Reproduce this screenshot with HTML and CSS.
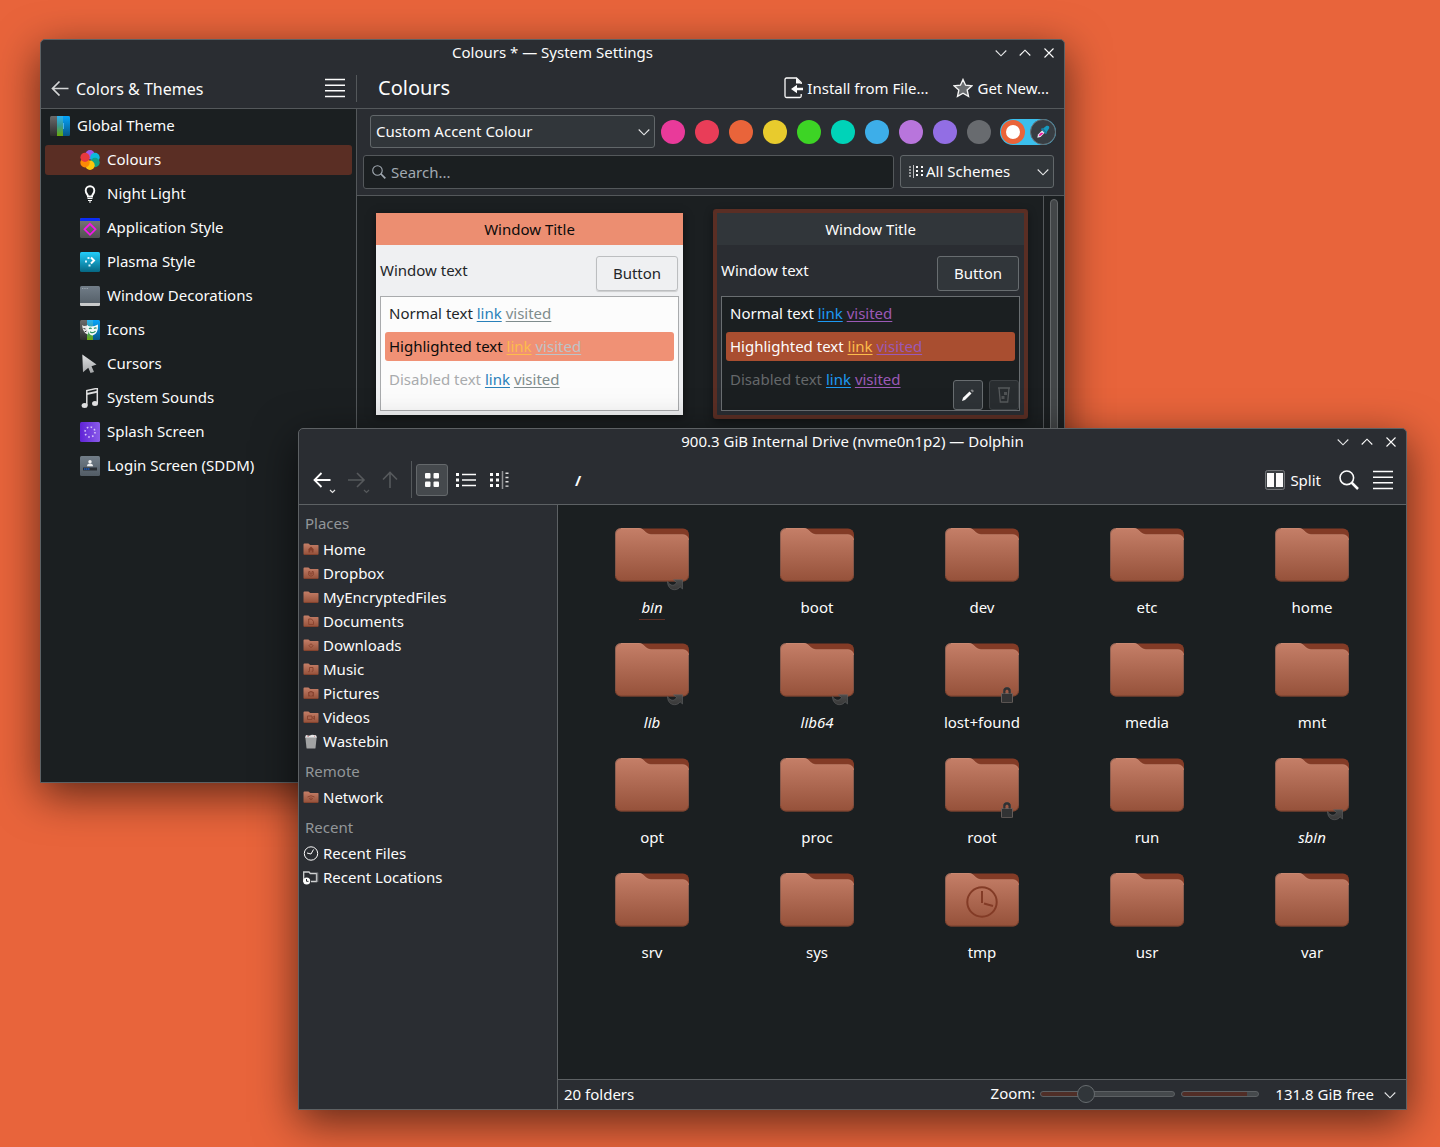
FILE: index.html
```html
<!DOCTYPE html>
<html lang="en">
<head>
<meta charset="utf-8">
<title>Desktop</title>
<link rel="stylesheet" href="styles.css">
</head>
<body>
<svg class="defs" width="0" height="0">
  <defs>
    <linearGradient id="g-folder" x1="0" y1="0" x2="0" y2="1"><stop offset="0" stop-color="#c57f68"/><stop offset="1" stop-color="#95513a"/></linearGradient>
    <linearGradient id="g-grey" x1="0" y1="0" x2="0" y2="1"><stop offset="0" stop-color="#6b6b6b"/><stop offset="1" stop-color="#2b2b2b"/></linearGradient>
    <linearGradient id="g-app" x1="0" y1="0" x2="0" y2="1"><stop offset="0" stop-color="#7a7a7a"/><stop offset="1" stop-color="#505050"/></linearGradient>
    <linearGradient id="g-mid" x1="0" y1="0" x2="0" y2="1"><stop offset="0" stop-color="#2ab2f2"/><stop offset=".5" stop-color="#3a9a90"/><stop offset="1" stop-color="#6aa808"/></linearGradient>
    <linearGradient id="g-blue" x1="0" y1="0" x2="0" y2="1"><stop offset="0" stop-color="#05a5fb"/><stop offset="1" stop-color="#075687"/></linearGradient>
    <linearGradient id="g-plasma" x1="0" y1="0" x2="0" y2="1"><stop offset="0" stop-color="#22cdfb"/><stop offset="1" stop-color="#066783"/></linearGradient>
    <linearGradient id="g-slate" x1="0" y1="0" x2="0" y2="1"><stop offset="0" stop-color="#717d88"/><stop offset="1" stop-color="#525c65"/></linearGradient>
    <linearGradient id="g-splash" x1="0" y1="0" x2="1" y2="0"><stop offset="0" stop-color="#5f22d6"/><stop offset="1" stop-color="#8a5cea"/></linearGradient>
    <linearGradient id="g-light" x1="0" y1="0" x2="0" y2="1"><stop offset="0" stop-color="#dfe1e2"/><stop offset="1" stop-color="#a3a5a7"/></linearGradient>
    <linearGradient id="g-emblem" x1="0" y1="0" x2="0" y2="1"><stop offset="0" stop-color="#4a4a4a"/><stop offset="1" stop-color="#383838"/></linearGradient>
    <symbol id="folder" viewBox="0 0 74 54">
      <path d="M25 .5H68a6 6 0 0 1 6 6V20H25z" fill="#833b26"/>
      <path d="M6 0H24C29 0 30 6 36 6.500H68a6 6 0 0 1 6 6V47.500a6 6 0 0 1-6 6H6a6 6 0 0 1-6-6V6A6 6 0 0 1 6 0z" fill="url(#g-folder)"/>
      <path d="M6 .5H24.500C29 .5 30 6.500 36 6.500H68a5.500 5.500 0 0 1 5.500 5.500" fill="none" stroke="#d19a86" stroke-opacity=".3"/>
      <path d="M.5 47V6A5.500 5.500 0 0 1 6 .5M73.500 12V47.500" fill="none" stroke="#5d4a45" stroke-opacity=".45"/>
      <path d="M.5 47.500A5.500 5.500 0 0 0 6 53H68a5.500 5.500 0 0 0 5.500-5.500" fill="none" stroke="#6e3a28" stroke-opacity=".7"/>
    </symbol>
    <symbol id="mini" viewBox="0 0 16 16">
      <path d="M1 2H6L7.500 3H15V12.500H1z" fill="#7d3823"/>
      <path d="M.5 2.500a1 1 0 0 1 1-1H5.500L7 3H15a.5.5 0 0 1 .5.5V12a.7.7 0 0 1-.7.700H1.200A.7.7 0 0 1 .5 12z" fill="url(#g-folder)"/>
      <path d="M1 12.500H15" stroke="#84432e" />
    </symbol>
    <symbol id="link" viewBox="0 0 17 12">
      <path d="M.5 2.500C.5 7.500 3.500 10.700 7.500 10.700 10 10.700 12 9.500 13 7.700L15.500 10V.8H6.500L9.500 3.500C8 7 3.500 7.500 .5 2.500z" fill="url(#g-emblem)" stroke="#606263" stroke-width=".6"/>
    </symbol>
    <symbol id="lock" viewBox="0 0 12 16">
      <path d="M2.500 7V4a3.500 3.500 0 0 1 7 0V7M11 6.500H1A.5.5 0 0 0 .5 7V15a.7.7 0 0 0 .7.700H10.800A.7.7 0 0 0 11.500 15V7a.5.5 0 0 0-.5-.5z" fill="#323334" stroke="#6b625f" stroke-width=".9"/>
      <path d="M4.300 6V4.300a1.700 1.700 0 0 1 3.400 0V6z" fill="#9a5a46"/>
      <path d="M3.300 6.500V4a2.700 2.700 0 0 1 5.400 0V6.500" fill="none" stroke="#303132" stroke-width="2"/>
    </symbol>
    <symbol id="down" viewBox="0 0 12 12"><path d="M.7 3.500 6 8.800 11.300 3.500" fill="none" stroke="#e6e7e8" stroke-width="1.100"/></symbol>
    <symbol id="up" viewBox="0 0 12 12"><path d="M.7 8.500 6 3.200 11.300 8.500" fill="none" stroke="#fcfcfc" stroke-width="1.100"/></symbol>
    <symbol id="close" viewBox="0 0 12 12"><path d="M1.500 1.500 10.500 10.500M10.500 1.500 1.500 10.500" fill="none" stroke="#fcfcfc" stroke-width="1.100"/></symbol>
    <symbol id="burger" viewBox="0 0 20 20"><path d="M0 1.500H20M0 7.300H20M0 12.700H20M0 18.500H20" stroke="#fcfcfc" stroke-width="1.500"/></symbol>
    <symbol id="search" viewBox="0 0 20 20"><circle cx="7.800" cy="7.800" r="6.800" fill="none" stroke="currentColor" stroke-width="1.600"/><path d="M12.500 12.500 19 19" stroke="currentColor" stroke-width="2.500"/></symbol>
  </defs>
</svg>

<section class="window settings">
  <header class="titlebar"><h1 class="title">Colours * — System Settings</h1>
    <div class="controls"><svg><use href="#down"/></svg><svg><use href="#up"/></svg><svg><use href="#close"/></svg></div>
  </header>
  <div class="settings-tools">
    <div class="crumb">
      <svg width="18" height="16" viewBox="0 0 18 16"><path d="M8.500 1.500 1.500 8.500 8.500 15.500M1.500 8.500H17.500" fill="none" stroke="#d4d5d6" stroke-width="1.700"/></svg>
      <span class="grow">Colors &amp; Themes</span>
      <svg width="20" height="20"><use href="#burger"/></svg>
    </div>
    <h2 class="page-title">Colours</h2>
    <div class="action install"><svg width="20" height="22" viewBox="0 0 20 22"><path d="M17.200 7V5.500L12.500 1H2.500A1.500 1.500 0 0 0 1 2.500V19A1.500 1.500 0 0 0 2.500 20.500H15.700A1.500 1.500 0 0 0 17.200 19V17" fill="none" stroke="#fcfcfc" stroke-width="1.300"/><path d="M12 .8V6.500H17.500zM7 12 13 7.700V10.700H19V13.300H13V16.300z" fill="#fcfcfc"/></svg><span>Install from File...</span></div>
    <div class="action getnew"><svg width="20" height="20" viewBox="0 0 20 20"><path d="M10 1.500 12.600 7.200 18.800 7.900 14.200 12.100 15.500 18.300 10 15.200 4.500 18.300 5.800 12.100 1.200 7.900 7.400 7.200z" fill="#696c6f" stroke="#f4f4f4" stroke-width="1.400"/></svg><span>Get New...</span></div>
  </div>
  <div class="settings-body">
    <nav class="categories">
      <div class="cat top"><svg viewBox="0 0 20 20"><rect width="20" height="20" rx="1.500" fill="url(#g-grey)"/><path d="M13 0H18.500A1.500 1.500 0 0 1 20 1.500V18.500A1.500 1.500 0 0 1 18.500 20H13z" fill="url(#g-blue)"/><path d="M7 0H13V20H7z" fill="url(#g-mid)"/><path d="M13.500 7V13" stroke="#4bb4ec"/></svg><span>Global Theme</span></div>
      <div class="cat active"><svg viewBox="0 0 20 20"><circle cx="10" cy="4.700" r="4.700" fill="#9b59e8"/><circle cx="15" cy="7.500" r="4.700" fill="#0cb9dc"/><circle cx="15" cy="12.500" r="4.700" fill="#12a085"/><circle cx="10" cy="15.300" r="4.700" fill="#fcc60b"/><circle cx="5" cy="12.700" r="4.700" fill="#fb8b05"/><circle cx="5" cy="7.300" r="4.600" fill="#e6393f"/></svg><span>Colours</span></div>
      <div class="cat"><svg viewBox="0 0 20 20"><path d="M8 12.500C8 10.500 5.700 9.500 5.700 6.500a4.300 4.300 0 0 1 8.600 0C14.300 9.500 12 10.500 12 12.500z" fill="none" stroke="#fcfcfc" stroke-width="1.900"/><path d="M7.500 14.500H12.500M8 16.500H12M9 18H11" stroke="#fcfcfc" stroke-width="1.200"/></svg><span>Night Light</span></div>
      <div class="cat"><svg viewBox="0 0 20 20"><rect width="20" height="20" rx="1.500" fill="url(#g-app)"/><path d="M0 3V1.500A1.500 1.500 0 0 1 1.500 0H18.500A1.500 1.500 0 0 1 20 1.500V3z" fill="#0b2cf5"/><path d="M10 5.800 15.500 11.300 10 16.800 4.500 11.300z" fill="none" stroke="#f516ea" stroke-width="1.800"/></svg><span>Application Style</span></div>
      <div class="cat"><svg viewBox="0 0 20 20"><rect width="20" height="20" rx="1.500" fill="url(#g-plasma)"/><path d="M11 5.500 14 8.500 11 11.500" fill="none" stroke="#fff" stroke-width="2"/><path d="M7.500 5h2v2H7.500zM5 8.500h2v2H5zM8.500 12.500h2v2h-2z" fill="#d9f6ff"/></svg><span>Plasma Style</span></div>
      <div class="cat"><svg viewBox="0 0 20 20"><rect width="20" height="20" rx="1.500" fill="url(#g-slate)"/><path d="M0 17H20V18.500A1.500 1.500 0 0 1 18.500 20H1.500A1.500 1.500 0 0 1 0 18.500z" fill="#c9cacb"/><path d="M2 2.500H8" stroke="#9aa5ae" stroke-dasharray="1 .7"/></svg><span>Window Decorations</span></div>
      <div class="cat"><svg viewBox="0 0 20 20"><rect width="20" height="20" rx="1.500" fill="url(#g-grey)"/><path d="M13 0H18.500A1.500 1.500 0 0 1 20 1.500V18.500A1.500 1.500 0 0 1 18.500 20H13z" fill="url(#g-blue)"/><path d="M7 0H13V20H7z" fill="url(#g-mid)"/><path d="M2 5Q4 7 8 5V14.500Q3 13.500 2 5z" fill="#e6e6e6"/><path d="M7 5.500Q12 8 18 4.500 18.500 14 12.500 15.500 7.500 14.500 7 5.500z" fill="#f2fbfb"/><path d="M9 8.700Q10.500 7.500 11.500 9M14 8.500Q15.500 7.200 16.500 8.300M10 11.700Q13 14 15.500 11.200" fill="none" stroke="#2b9161" stroke-width="1.200"/><path d="M3.500 8.500 5.500 9M4.500 12 6.500 11" stroke="#333"/></svg><span>Icons</span></div>
      <div class="cat"><svg viewBox="0 0 20 20"><path d="M2.300 .5 16.500 10.500 11.500 12.300 14 18 10.500 19 8.300 13.700 3 18.300z" fill="url(#g-light)"/></svg><span>Cursors</span></div>
      <div class="cat"><svg viewBox="0 0 20 20"><path d="M6.800 17.500V2.500L17.300.3V15.300" fill="none" stroke="#dededf" stroke-width="1.500"/><path d="M6.800 5 17.300 2.700V4.700L6.800 7z" fill="#dededf"/><ellipse cx="4.600" cy="17.500" rx="3" ry="2.500" fill="#dededf"/><ellipse cx="15" cy="15.500" rx="3" ry="2.500" fill="#dededf"/></svg><span>System Sounds</span></div>
      <div class="cat"><svg viewBox="0 0 20 20"><rect width="20" height="20" rx="1.500" fill="url(#g-splash)"/><circle cx="10" cy="10" r="5" fill="none" stroke="#d5c3f8" stroke-width="1.600" stroke-dasharray="1.600 2.327"/></svg><span>Splash Screen</span></div>
      <div class="cat"><svg viewBox="0 0 20 20"><rect width="20" height="20" rx="1.500" fill="url(#g-slate)"/><circle cx="10" cy="5.700" r="1.700" fill="#f3f3f3"/><path d="M7 10.300Q7 7.600 10 7.600T13 10.300z" fill="#eceded"/><rect x="3" y="11.500" width="14" height="3" fill="#2a2f34"/><path d="M4 13H9.500" stroke="#1c4f9c" stroke-width="2" stroke-dasharray="1.500 .5"/></svg><span>Login Screen (SDDM)</span></div>
    </nav>
    <main class="page">
      <div class="filters">
        <div class="accent-row">
          <div class="combo accent"><span class="grow">Custom Accent Colour</span><svg width="12" height="12"><use href="#down"/></svg></div>
          <div class="swatches"><i class="dot pink"></i><i class="dot red"></i><i class="dot orange"></i><i class="dot yellow"></i><i class="dot green"></i><i class="dot teal"></i><i class="dot blue"></i><i class="dot orchid"></i><i class="dot violet"></i><i class="dot grey"></i></div>
          <div class="picker"><i class="picked"></i><span class="dropper"><svg width="16" height="16" viewBox="0 0 16 16"><path d="M8 4.500 11.500 1.800Q14.500 1 14.300 4L11.500 8.500z" fill="#1699bd"/><path d="M7.500 6 3 10.500 2.300 13.700 5.500 13 10 8.500z" fill="#e9e4f0"/><path d="M6 8.800 3.800 11.300 4.800 12.300 8.700 9z" fill="#f0139c"/><path d="M6.500 4.500 11.500 9.500" stroke="#1b7fa3" stroke-width="1.800"/></svg></span></div>
        </div>
        <div class="search-row">
          <div class="search"><svg width="14" height="14"><use href="#search"/></svg><span>Search...</span></div>
          <div class="combo schemes"><svg width="14" height="14" viewBox="0 0 14 14"><path d="M1 1.500v11" stroke="#fcfcfc" stroke-width="2" stroke-dasharray="1 2"/><path d="M4.500 0v13" stroke="#bfc0c1"/><path d="M8 1v12M13 1v12" stroke="#fcfcfc" stroke-width="2" stroke-dasharray="2 2"/></svg><span class="grow">All Schemes</span><svg width="12" height="12"><use href="#down"/></svg></div>
        </div>
      </div>
      <div class="scheme-view">
        <div class="schemes-list">
          <article class="scheme light">
            <div class="s-title">Window Title</div>
            <div class="s-head"><span>Window text</span><span class="s-button">Button</span></div>
            <div class="s-box">
              <p class="s-line">Normal text <u class="l">link</u> <u class="v">visited</u></p>
              <p class="s-line hi">Highlighted text <u class="l">link</u> <u class="v">visited</u></p>
              <p class="s-line dis">Disabled text <u class="l">link</u> <u class="v">visited</u></p>
            </div>
          </article>
          <article class="scheme dark">
            <div class="s-title">Window Title</div>
            <div class="s-head"><span>Window text</span><span class="s-button">Button</span></div>
            <div class="s-box">
              <p class="s-line">Normal text <u class="l">link</u> <u class="v">visited</u></p>
              <p class="s-line hi">Highlighted text <u class="l">link</u> <u class="v">visited</u></p>
              <p class="s-line dis">Disabled text <u class="l">link</u> <u class="v">visited</u></p>
            </div>
            <div class="s-actions"><span class="tool"><svg width="14" height="14" viewBox="0 0 14 14"><path d="M1 13 2 9.800 8.500 3.500 10.500 5.500 4 12z" fill="#fcfcfc"/><path d="M9.500 2.500 11 1.200 13 3 11.500 4.500z" fill="#858789"/></svg></span><span class="tool off"><svg width="14" height="16" viewBox="0 0 14 16"><path d="M1 1H13M2 1 3.300 15H10.700L12 1" fill="none" stroke="#56595b" stroke-width="1.300"/><path d="M7 5h3v3H7zM4.500 9h3v3h-3z" fill="#505355"/></svg></span></div>
          </article>
        </div>
        <div class="scroll"><i class="thumb"></i></div>
      </div>
    </main>
  </div>
</section>

<section class="window dolphin">
  <header class="titlebar"><h1 class="title">900.3 GiB Internal Drive (nvme0n1p2) — Dolphin</h1>
    <div class="controls"><svg><use href="#down"/></svg><svg><use href="#up"/></svg><svg><use href="#close"/></svg></div>
  </header>
  <div class="d-tools">
    <svg class="nav-icons" width="100" height="38" viewBox="0 0 100 38" fill="none"><path d="M9.500 12 2.500 19 9.500 26M2.500 19H18.500" stroke="#fcfcfc" stroke-width="1.800"/><path d="M18 29 20.500 31.500 23 29" stroke="#e0e0e0" stroke-width="1.200"/><g stroke="#56595c" stroke-width="1.600"><path d="M45 12 52 19 45 26M52 19H36"/><path d="M52 29 54.500 31.500 57 29" stroke-width="1.200"/><path d="M71 18.500 78 11.500 85 18.500M78 11.500V27"/></g></svg>
    <i class="sep"></i>
    <span class="mode on"><svg width="14" height="14" viewBox="0 0 14 14" fill="#fcfcfc"><rect width="5.500" height="5.500" rx="1"/><rect x="8.500" width="5.500" height="5.500" rx="1"/><rect y="8.500" width="5.500" height="5.500" rx="1"/><rect x="8.500" y="8.500" width="5.500" height="5.500" rx="1"/></svg></span>
    <span class="mode"><svg width="20" height="14" viewBox="0 0 20 14"><path d="M0 1.500H3M0 7H3M0 12.500H3" stroke="#fcfcfc" stroke-width="3"/><path d="M6 1.500H20M6 7H20M6 12.500H20" stroke="#fcfcfc" stroke-width="1.700"/></svg></span>
    <span class="mode"><svg width="20" height="18" viewBox="0 0 20 18"><path d="M1.500 2v14M7.500 2v14" stroke="#fcfcfc" stroke-width="3" stroke-dasharray="3 2.500"/><path d="M12.500 0V18" stroke="#929496" stroke-width="1.500"/><path d="M17 1.500v14.500" stroke="#e0e0e0" stroke-width="3" stroke-dasharray="1.400 2.900"/></svg></span>
    <b class="path">/</b>
    <div class="d-right"><svg width="20" height="20" viewBox="0 0 20 20"><rect x=".5" y=".5" width="19" height="19" rx="2" fill="#3b3f43" stroke="#74777a"/><path d="M2 3H9V17H2zM11 3H18V17H11z" fill="#fcfcfc"/></svg><span class="split">Split</span><svg class="find" width="20" height="20"><use href="#search"/></svg><svg width="20" height="20"><use href="#burger"/></svg></div>
  </div>
  <div class="d-body">
    <aside class="places">
      <h3>Places</h3>
      <div class="place"><svg viewBox="0 0 16 16"><use href="#mini"/><path d="M8 4.500 11 7.500H10.500V10.500H5.500V7.500H5z" fill="#843f2b"/><path d="M7.500 8.500h1v2h-1z" fill="#b06a54"/></svg>Home</div>
      <div class="place"><svg viewBox="0 0 16 16"><use href="#mini"/><path d="M5.500 5.500H7V8H9V5.500H10.500M5.700 6V9L8 10.300 10.300 9V6" fill="none" stroke="#8a4531"/></svg>Dropbox</div>
      <div class="place"><svg viewBox="0 0 16 16"><use href="#mini"/></svg>MyEncryptedFiles</div>
      <div class="place"><svg viewBox="0 0 16 16"><use href="#mini"/><path d="M5.700 5H8.500L10.500 7.500V10.500H5.700z" fill="none" stroke="#8a4531"/></svg>Documents</div>
      <div class="place"><svg viewBox="0 0 16 16"><use href="#mini"/><path d="M8 5.700 10 7.700 8 9.700 6 7.700z" fill="none" stroke="#8a4531"/></svg>Downloads</div>
      <div class="place"><svg viewBox="0 0 16 16"><use href="#mini"/><path d="M6.500 9.500V5.500H10V9M5 9.700H6.500M8.700 9.300H10" fill="none" stroke="#8a4531"/></svg>Music</div>
      <div class="place"><svg viewBox="0 0 16 16"><use href="#mini"/><path d="M5 6H6.500V5H9.500V6H11V10.500H5z" fill="#8a4531"/><circle cx="8" cy="8" r="1.200" fill="none" stroke="#b8735e" stroke-width=".7"/></svg>Pictures</div>
      <div class="place"><svg viewBox="0 0 16 16"><use href="#mini"/><path d="M4.500 6H9V9.500H4.500zM9.500 7.700 11.500 6V9.500z" fill="none" stroke="#8a4531"/></svg>Videos</div>
      <div class="place"><svg viewBox="0 0 16 16"><path d="M2.300 3H13.700L12.500 14Q12.400 14.500 12 14.500H4Q3.600 14.500 3.500 14z" fill="#a1a2a3"/><path d="M2 3.500 3 1 6 1.800 9 .8 13 1.300 14 3.500z" fill="#e6e6e7"/><path d="M4 2 6 2.500M11 2 12 2.500" stroke="#cf8e90"/></svg>Wastebin</div>
      <h3>Remote</h3>
      <div class="place"><svg viewBox="0 0 16 16"><use href="#mini"/><path d="M4.500 7Q8 4.500 11.500 7M6.300 8.500Q8 7.300 9.700 8.500L8 10z" fill="none" stroke="#8a4531"/></svg>Network</div>
      <h3>Recent</h3>
      <div class="place"><svg viewBox="0 0 16 16" fill="none" stroke="#fcfcfc"><circle cx="8" cy="7.500" r="6.700"/><path d="M4 7 8 8 10.500 3.500"/></svg>Recent Files</div>
      <div class="place"><svg viewBox="0 0 16 16"><path d="M.7 12V2H6L7.300 3.500H13.500V11.500H8" fill="none" stroke="#d0d1d2" stroke-width="1.300"/><path d="M14.500 2.500V12" stroke="#74777a" stroke-width="1.500"/><circle cx="3.700" cy="11" r="3.500" fill="#fcfcfc"/><path d="M3.500 9V11.300H5.500" fill="none" stroke="#2a2d32"/></svg>Recent Locations</div>
    </aside>
    <div class="content">
      <div class="files">
        <div class="file ln current"><svg class="fold"><use href="#folder"/></svg><svg class="em-link"><use href="#link"/></svg><span>bin</span></div>
        <div class="file"><svg class="fold"><use href="#folder"/></svg><span>boot</span></div>
        <div class="file"><svg class="fold"><use href="#folder"/></svg><span>dev</span></div>
        <div class="file"><svg class="fold"><use href="#folder"/></svg><span>etc</span></div>
        <div class="file"><svg class="fold"><use href="#folder"/></svg><span>home</span></div>
        <div class="file ln"><svg class="fold"><use href="#folder"/></svg><svg class="em-link"><use href="#link"/></svg><span>lib</span></div>
        <div class="file ln"><svg class="fold"><use href="#folder"/></svg><svg class="em-link"><use href="#link"/></svg><span>lib64</span></div>
        <div class="file"><svg class="fold"><use href="#folder"/></svg><svg class="em-lock"><use href="#lock"/></svg><span>lost+found</span></div>
        <div class="file"><svg class="fold"><use href="#folder"/></svg><span>media</span></div>
        <div class="file"><svg class="fold"><use href="#folder"/></svg><span>mnt</span></div>
        <div class="file"><svg class="fold"><use href="#folder"/></svg><span>opt</span></div>
        <div class="file"><svg class="fold"><use href="#folder"/></svg><span>proc</span></div>
        <div class="file"><svg class="fold"><use href="#folder"/></svg><svg class="em-lock"><use href="#lock"/></svg><span>root</span></div>
        <div class="file"><svg class="fold"><use href="#folder"/></svg><span>run</span></div>
        <div class="file ln"><svg class="fold"><use href="#folder"/></svg><svg class="em-link"><use href="#link"/></svg><span>sbin</span></div>
        <div class="file"><svg class="fold"><use href="#folder"/></svg><span>srv</span></div>
        <div class="file"><svg class="fold"><use href="#folder"/></svg><span>sys</span></div>
        <div class="file"><svg class="fold" viewBox="0 0 74 54"><use href="#folder"/><g fill="none" stroke="#833b26" stroke-width="2"><circle cx="37" cy="29" r="14.700"/><path d="M37 18V30M39 30.500 48 33"/></g></svg><span>tmp</span></div>
        <div class="file"><svg class="fold"><use href="#folder"/></svg><span>usr</span></div>
        <div class="file"><svg class="fold"><use href="#folder"/></svg><span>var</span></div>
      </div>
      <footer class="status">
        <span class="grow">20 folders</span>
        <span class="zoom-label">Zoom:</span>
        <div class="slider"><i class="knob"></i></div>
        <div class="usage"></div>
        <span class="free">131.8 GiB free</span>
        <svg width="12" height="12"><use href="#down"/></svg>
      </footer>
    </div>
  </div>
</section>
</body>
</html>
```
FILE: styles.css
```css
* { box-sizing: border-box; }
body {
  margin: 0; width: 1440px; height: 1147px; overflow: hidden; position: relative;
  background: #e8643b; color: #fcfcfc;
  font: 15px/20px "Noto Sans", sans-serif; white-space: nowrap;
}
svg { display: block; flex: none; }
.defs { position: absolute; }
h1, h2, h3, p { margin: 0; font-weight: 400; font-size: inherit; }
.grow { flex: 1; }

.window {
  position: absolute; display: flex; flex-direction: column;
  border: 1px solid #5d6164; border-radius: 5px 5px 0 0;
  background: #2a2d32; overflow: hidden;
  box-shadow: 0 12px 44px rgba(0, 0, 0, .6);
}
.settings { left: 40px; top: 39px; width: 1025px; height: 744px; }
.dolphin { left: 298px; top: 428px; width: 1109px; height: 682px; }

.titlebar { height: 26px; flex: none; display: grid; grid-template-columns: 1fr auto 1fr; align-items: center; }
.title { grid-column: 2; padding-bottom: 2px; }
.controls { justify-self: end; display: flex; gap: 12px; padding-right: 9px; }
.controls svg { width: 12px; height: 12px; }

/* System Settings */
.settings-tools { height: 43px; flex: none; display: flex; align-items: center; padding-top: 2px; border-bottom: 1px solid #54585b; }
.crumb { width: 316px; height: 27px; display: flex; align-items: center; padding: 0 11px 0 10px; gap: 7px; border-right: 1px solid #54585b; font-size: 16px; }
.crumb span { padding-top: 2px; }
.page-title { flex: 1; padding-left: 21px; font-size: 20px; }
.action { display: flex; align-items: center; gap: 3px; }
.getnew { margin: 0 15px 0 25px; gap: 4px; }
.settings-body { flex: 1; display: flex; min-height: 0; }
.categories { width: 316px; padding: 0 4px; background: #1b1f21; border-right: 1px solid #54585b; }
.cat { height: 30px; margin: 2px 0 4px; padding-left: 35px; display: flex; align-items: center; gap: 7px; border-radius: 3px; }
.cat svg { width: 20px; height: 20px; }
.cat span { padding-bottom: 2px; }
.cat.top { padding-left: 5px; }
.cat.active { background: #5a2e24; }
.page { flex: 1; display: flex; flex-direction: column; min-width: 0; }
.filters { height: 87px; flex: none; border-bottom: 1px solid #54585b; padding-top: 6px; }
.accent-row { display: flex; align-items: center; padding-left: 13px; height: 33px; }
.combo { height: 33px; display: flex; align-items: center; border: 1px solid #62676a; border-radius: 3px; background: #31363a; padding: 0 4px 0 5px; }
.combo span { padding-bottom: 2px; }
.accent { width: 285px; }
.swatches { display: flex; gap: 10px; margin: 0 9px 0 6px; }
.dot { width: 24px; height: 24px; border-radius: 50%; }
.pink { background: #e93a9a; } .red { background: #e93d58; } .orange { background: #e9643a; } .yellow { background: #e8cb2d; }
.green { background: #3dd425; } .teal { background: #00d3b8; } .blue { background: #3daee9; } .orchid { background: #b875dc; }
.violet { background: #926ee4; } .grey { background: #686b6f; }
.picker { width: 56px; height: 26px; border-radius: 13px; background: #3bbfec; display: flex; align-items: center; justify-content: space-between; padding-left: 1px; }
.picked { width: 24px; height: 24px; border: 5px solid #e9643a; border-radius: 50%; background: #fff; }
.dropper { width: 26px; height: 26px; border-radius: 50%; border: 1px solid #667177; background: #373d42; display: grid; place-items: center; }
.search-row { display: flex; gap: 6px; padding: 7px 0 0 6px; }
.search { width: 531px; height: 34px; border: 1px solid #54585b; border-radius: 3px; background: #1b1f21; color: #a1a9b1; display: flex; align-items: center; padding-left: 8px; gap: 5px; }
.schemes { width: 154px; gap: 3px; padding-left: 8px; }
.scheme-view { flex: 1; display: flex; background: #1b1f21; }
.schemes-list { flex: 1; display: flex; align-items: flex-start; gap: 34px; padding: 17px 0 0 19px; }
.scheme { width: 307px; height: 202px; position: relative; }
.light { background: #eff0f2; color: #232629; box-shadow: 0 2px 8px rgba(0, 0, 0, .5); }
.dark { background: #2a2d32; box-shadow: 0 0 0 4px #5a2e24, 0 3px 8px 4px rgba(0, 0, 0, .4); border-radius: 1px; }
.s-title { height: 32px; display: grid; place-items: center; }
.light .s-title { background: #ec8e71; color: #0b0b0b; }
.dark .s-title { background: #31363a; }
.s-head { height: 51px; display: flex; justify-content: space-between; padding: 11px 5px 0 4px; }
.s-head > span:first-child { padding-top: 4px; }
.s-button { width: 82px; height: 35px; display: grid; place-items: center; padding-bottom: 2px; border: 1px solid #bcbec0; border-radius: 3px; }
.dark .s-button { border-color: #686d70; background: #31363a; }
.light .s-button { box-shadow: 0 1px 1px rgba(0, 0, 0, .15); }
.s-box { margin: 0 4px; height: 115px; border: 1px solid #a9abad; background: #fcfcfc; padding: 2px 4px; }
.dark .s-box { background: #1b1f21; border-color: #6a6e71; }
.s-line { height: 29px; line-height: 29px; margin-bottom: 4px; padding-left: 4px; border-radius: 3px; }
u { text-decoration: underline 1px; text-underline-offset: 2px; text-decoration-skip-ink: none; }
.light .hi { background: #f09175; color: #0b0b0b; } .dark .hi { background: #a94e30; }
.light .dis { color: #a9abad; } .dark .dis { color: #65686a; }
.light .l { color: #2980b9; } .light .v { color: #7f8c8d; }
.dark .l { color: #1d99f3; } .dark .v { color: #9b59b6; }
.light .hi .l, .dark .hi .l { color: #fdbc4b; } .light .hi .v { color: #bdc3c7; }
.s-actions { position: absolute; right: 5px; bottom: 5px; display: flex; gap: 6px; }
.tool { width: 30px; height: 30px; border: 1px solid #686d70; border-radius: 3px; background: #2e3337; display: grid; place-items: center; }
.tool.off { border-color: #3d4144; background: #292d30; }
.scroll { width: 21px; border-left: 1px solid #54585b; padding: 3px 0 0 6px; }
.thumb { display: block; width: 8px; height: 400px; border-radius: 4px; background: #434648; border: 1px solid #65686a; }

/* Dolphin */
.d-tools { height: 50px; flex: none; display: flex; align-items: center; border-bottom: 1px solid #5d6164; }
.nav-icons { margin-left: 13px; }
.sep { width: 1px; height: 37px; background: #54585b; margin: 0 4px 0 -1px; }
.mode { width: 32px; height: 32px; margin-right: 2px; display: grid; place-items: center; border: 1px solid transparent; border-radius: 3px; }
.mode.on { background: #45494d; border-color: #64686b; }
.path { margin-left: 57px; }
.d-right { margin-left: auto; padding-right: 13px; display: flex; align-items: center; }
.split { margin: 0 18px 0 5px; }
.find { margin-right: 14px; }
.d-body { flex: 1; display: flex; min-height: 0; }
.places { width: 259px; border-right: 1px solid #5d6164; padding-top: 1px; }
.places h3 { height: 32px; padding: 7px 0 0 6px; color: #929699; }
.place { height: 24px; display: flex; align-items: center; gap: 4px; padding: 0 0 2px 4px; }
.place svg { width: 16px; height: 16px; margin-top: 2px; }
.content { flex: 1; display: flex; flex-direction: column; background: #1b1f21; min-width: 0; }
.files { flex: 1; display: grid; grid-template-columns: repeat(5, 165px); grid-auto-rows: 115px; padding: 23px 0 0 11px; align-content: start; }
.file { position: relative; display: flex; flex-direction: column; align-items: center; }
.file span { margin: 15px 0 0 1px; }
.fold { width: 74px; height: 54px; }
.ln { font-style: italic; }
.current span { padding: 0 2px 2px; border-bottom: 1px solid #5f3027; }
.em-link { position: absolute; left: 98px; top: 51px; width: 17px; height: 12px; }
.em-lock { position: absolute; left: 102px; top: 44px; width: 12px; height: 16px; }
.status { height: 30px; flex: none; border-top: 1px solid #5d6164; background: #2a2d32; display: flex; align-items: center; padding: 0 10px 2px 6px; }
.status svg { margin-top: 2px; }
.zoom-label { padding-bottom: 2px; }
.slider, .usage { height: 6px; border: 1px solid #5d6164; border-radius: 3px; }
.slider { width: 135px; margin: 0 6px 0 5px; background: linear-gradient(90deg, #4f2e27 40px, #45494c 40px); position: relative; }
.knob { position: absolute; left: 36px; top: -7px; width: 18px; height: 18px; border-radius: 50%; background: #31363a; border: 1px solid #676c6f; }
.usage { width: 78px; margin-right: 16px; background: linear-gradient(90deg, #512d26 65px, #45494c 65px); }
.free { margin-right: 10px; }
```
